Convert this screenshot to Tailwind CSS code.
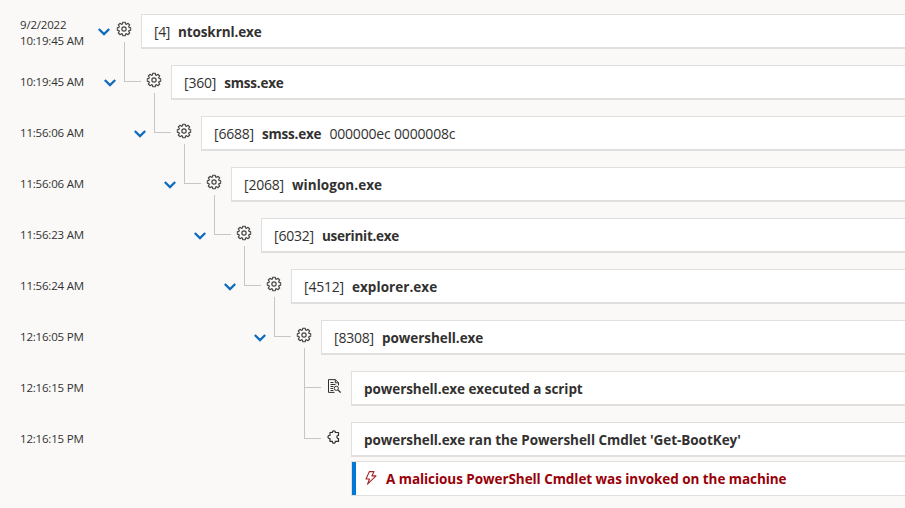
<!DOCTYPE html>
<html lang="en">
<head>
<meta charset="utf-8">
<title>Process tree</title>
<script src="https://cdn.jsdelivr.net/npm/@tailwindcss/browser@4"></script>
</head>
<body class="h-[508px] overflow-hidden bg-[#faf9f8] font-['Open_Sans','Noto_Sans',sans-serif] text-[#323130]">
<svg class="hidden">
  <symbol id="chev" viewBox="0 0 12 8"><path d="M.8 1 6 6.1 11.2 1" fill="none" stroke="#0f6cbd" stroke-width="2.3"/></symbol>
  <symbol id="gear" viewBox="0 0 14 14"><g fill="none" stroke="#484644" stroke-width="1.15" stroke-linejoin="round"><path d="M5.9.6H8.1L8.5 2.3 9.3 2.6 10.8 1.7 12.3 3.2 11.4 4.7 11.7 5.5 13.4 5.9V8.1L11.7 8.5 11.4 9.3 12.3 10.8 10.8 12.3 9.3 11.4 8.5 11.7 8.1 13.4H5.9L5.5 11.7 4.7 11.4 3.2 12.3 1.7 10.8 2.6 9.3 2.3 8.5.6 8.1V5.9L2.3 5.5 2.6 4.7 1.7 3.2 3.2 1.7 4.7 2.6 5.5 2.3Z"/><circle cx="7" cy="7" r="2"/></g></symbol>
</svg>
<main class="flex flex-col pt-[14px] text-[14px] leading-[19px]" id="tree">
</main>
<template id="process">
  <div class="flex h-[51px] items-start">
    <div data-time class="shrink-0 pl-5 pt-[9px] text-[11.5px] leading-4 tracking-[-0.19px] whitespace-nowrap"></div>
    <svg class="mt-[14px] h-2 w-3 shrink-0"><use href="#chev"/></svg>
    <div data-line class="-mt-[23px] mr-[5px] ml-2 h-[40px] w-[17px] shrink-0 border-b border-l border-[#c8c6c4]"></div>
    <svg class="mt-[7px] mr-[9px] h-4 w-4 shrink-0" viewBox="0 0 15 15"><use href="#gear" x=".5" y=".5" width="14" height="14"/></svg>
    <div class="flex h-[35px] flex-1 items-center gap-2 border-t border-b-2 border-l border-[#e1dfdd] bg-white pt-[2px] pl-3 whitespace-nowrap">
      <span data-pid class="-mt-[2px] tracking-[-0.2px]"></span><span data-name class="text-[13.5px] font-bold"></span><span data-args class="-mt-[2px] tracking-[-0.18px]"></span>
    </div>
  </div>
</template>
<div class="flex h-[51px] items-start leading-[19px]">
  <div class="w-[304px] shrink-0 pt-[9px] pl-5 text-[11.5px] leading-4 tracking-[-0.19px]">12:16:15 PM</div>
  <div class="-mt-[23px] h-[40px] w-[17px] shrink-0 border-b border-l border-[#c8c6c4]"></div>
  <svg class="mt-[8px] mr-[10px] ml-[6px] h-[14px] w-[14px] shrink-0" viewBox="0 0 14 14" fill="none" stroke="#323130"><path d="M7.5 13.4H1.5V.6H8.3L11.5 3.8V6.5M8.3.6V3.8H11.5M3.5 3.5H6.5M3.5 5.5H8.5M3.5 7.5H6.5M3.5 9.5H6M3.5 11.5H6.5" stroke-width="1"/><circle cx="9.3" cy="9.3" r="2.1" stroke-width="1"/><path d="M10.9 10.9 13.6 13.6" stroke-width="1.3"/></svg>
  <div class="flex h-[35px] flex-1 items-center border-t border-b-2 border-l border-[#e1dfdd] bg-white pt-[2px] pl-3 text-[13.5px] font-bold tracking-[-0.07px] whitespace-nowrap">powershell.exe executed a script</div>
</div>
<div class="flex h-[39px] items-start leading-[19px]">
  <div class="w-[304px] shrink-0 pt-[9px] pl-5 text-[11.5px] leading-4 tracking-[-0.19px]">12:16:15 PM</div>
  <div class="-mt-[35px] h-[52px] w-[17px] shrink-0 border-b border-l border-[#c8c6c4]"></div>
  <svg class="mt-[8px] mr-[10px] ml-[6px] h-[14px] w-[14px] shrink-0" viewBox="0 0 14 14" fill="none" stroke="#323130" stroke-width="1.2" stroke-linejoin="round"><path d="M3 2.5H5.4C5 .2 8.7.2 8.3 2.5H11.5V5.3C9.4 5 9.4 8.8 11.5 8.5V11.4H8.3C8.7 13.8 5 13.8 5.4 11.4H3V8.5C.3 8.9.3 4.9 3 5.3Z"/></svg>
  <div class="flex h-[35px] flex-1 items-center border-t border-b-2 border-l border-[#e1dfdd] bg-white pt-[2px] pl-3 text-[13.5px] font-bold tracking-[-0.05px] whitespace-nowrap">powershell.exe ran the Powershell Cmdlet 'Get-BootKey'</div>
</div>
<div class="ml-[351px] flex h-[35px] items-center border-y border-l border-[#e1dfdd] bg-white text-[13.5px] leading-[19px] font-bold tracking-[-0.06px] whitespace-nowrap text-[#990008]">
  <div class="mr-[9px] h-full w-1 shrink-0 bg-[#0078d4]"></div>
  <svg class="-mt-[1px] mr-[9px] h-[14px] w-[12px] shrink-0" viewBox="0 0 12 14" fill="none" stroke="#a4262c" stroke-width="1.1" stroke-linejoin="round"><path d="M4.4.6H9L6.9 4.9H11L2.5 13.2 4.5 8H1Z"/></svg>
  <span class="pt-px">A malicious PowerShell Cmdlet was invoked on the machine</span>
</div>
<script>
const rows = [
  ["9/2/2022\n10:19:45 AM", "[4]", "ntoskrnl.exe", "", -.1],
  ["10:19:45 AM", "[360]", "smss.exe", "", -.2],
  ["11:56:06 AM", "[6688]", "smss.exe", "000000ec 0000008c", -.2],
  ["11:56:06 AM", "[2068]", "winlogon.exe", "", .05],
  ["11:56:23 AM", "[6032]", "userinit.exe", "", -.27],
  ["11:56:24 AM", "[4512]", "explorer.exe", "", .05],
  ["12:16:05 PM", "[8308]", "powershell.exe", "", -.05]
];
const tree = document.getElementById("tree"), tpl = document.getElementById("process");
rows.forEach(([time, pid, name, args, ls], k) => {
  const r = tpl.content.cloneNode(true), q = s => r.querySelector(s);
  const t = q("[data-time]");
  t.textContent = time;
  t.style.width = (k ? 74 + 30 * k : 98) + "px";
  if (!k) {
    t.style.whiteSpace = "pre";
    t.style.paddingTop = "3px";
    q("[data-line]").style.cssText = "width:0;margin-right:0;margin-left:6px;border:0";
    q("[data-pid]").style.letterSpacing = "-.4px";
  }
  q("[data-pid]").textContent = pid;
  q("[data-name]").textContent = name;
  q("[data-name]").style.letterSpacing = ls + "px";
  if (args) q("[data-args]").textContent = args; else q("[data-args]").remove();
  tree.append(r);
});
</script>
</body>
</html>
